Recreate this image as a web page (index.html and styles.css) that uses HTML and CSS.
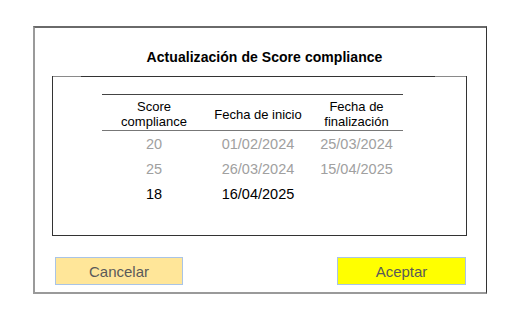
FILE: index.html
```html
<!DOCTYPE html>
<html lang="es">
<head>
<meta charset="utf-8">
<title>Actualización de Score compliance</title>
<link rel="stylesheet" href="styles.css">
</head>
<body>
<div class="dialog">
  <div class="title">Actualización de Score compliance</div>
  <div class="panel">
    <table class="grid">
      <thead>
        <tr>
          <th class="c1">Score<br>compliance</th>
          <th class="c2">Fecha de inicio</th>
          <th class="c3">Fecha de<br>finalización</th>
        </tr>
      </thead>
      <tbody>
        <tr class="past"><td>20</td><td>01/02/2024</td><td>25/03/2024</td></tr>
        <tr class="past"><td>25</td><td>26/03/2024</td><td>15/04/2025</td></tr>
        <tr class="current"><td>18</td><td>16/04/2025</td><td></td></tr>
      </tbody>
    </table>
  </div>
  <div class="actions">
    <button class="btn cancel">Cancelar</button>
    <button class="btn accept">Aceptar</button>
  </div>
</div>
</body>
</html>
```
FILE: styles.css
```css
html, body {
  margin: 0;
  background: #ffffff;
}
body {
  padding: 26px 0 0 33px;
  font-family: "Liberation Sans", Arial, sans-serif;
}
.dialog {
  box-sizing: border-box;
  width: 454px;
  height: 268px;
  border-left: 2px solid #9a9a9a;
  border-top: 2px solid #6a6a6a;
  border-right: 1px solid #333333;
  border-bottom: 2px solid #9a9a9a;
  background: #ffffff;
}
.title {
  font-weight: bold;
  font-size: 14px;
  line-height: 16px;
  letter-spacing: 0.05px;
  color: #000000;
  text-align: center;
  padding: 21px 0 0 8px;
  margin-bottom: 11px;
}
.panel {
  box-sizing: border-box;
  margin-left: 17px;
  width: 415px;
  height: 160px;
  border: 1px solid #333333;
  border-top: none;
  padding-top: 18px;
  background: linear-gradient(to right, #8a8a8a 0 28px, #333333 28px calc(100% - 31px), #8a8a8a calc(100% - 31px)) top left / 100% 1px no-repeat;
}
.grid {
  margin-left: 49px;
  width: 301px;
  border-collapse: collapse;
  border-top: 1px solid #444444;
}
.grid th {
  font-weight: normal;
  font-size: 13px;
  line-height: 15px;
  color: #000000;
  padding: 4px 0 1px;
  vertical-align: middle;
  border-bottom: 1px solid #777777;
  text-align: center;
}
.grid .c1 { width: 104px; }
.grid .c2 { width: 104px; }
.grid .c3 { width: 93px; }
.grid td {
  font-size: 14.5px;
  height: 25px;
  padding: 0;
  text-align: center;
  vertical-align: middle;
}
.past td { color: #a0a0a0; }
.current td { color: #000000; }
.actions {
  display: flex;
  justify-content: space-between;
  padding: 0 20px 0 20px;
  margin-top: 21px;
}
.btn {
  box-sizing: border-box;
  width: 128px;
  height: 28px;
  border: 1px solid #a9c4e6;
  font-family: "Liberation Sans", Arial, sans-serif;
  font-size: 15px;
  color: #5a5a5a;
  padding: 0;
}
.cancel { background: #ffe699; }
.accept { background: #ffff00; width: 129px; }
```
